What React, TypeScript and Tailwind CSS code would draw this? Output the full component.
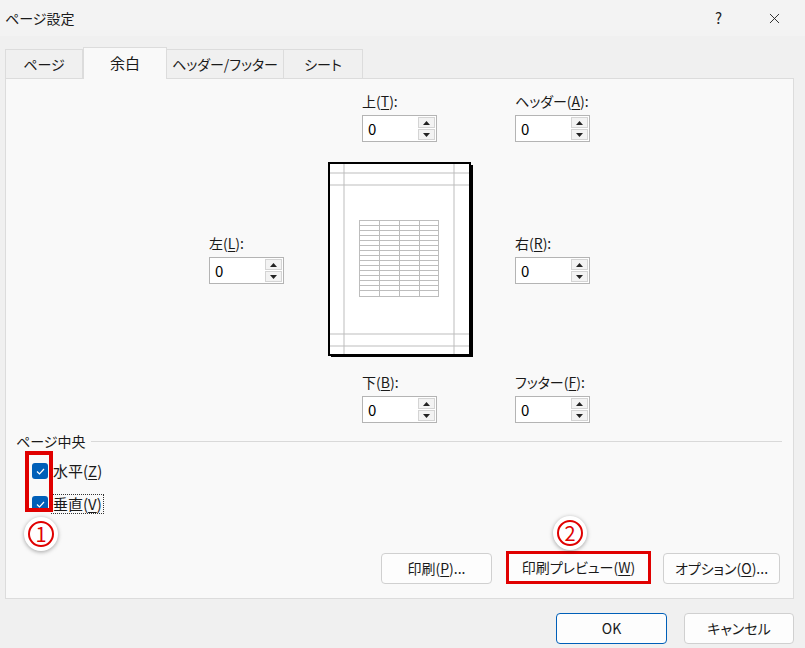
import { X } from "lucide-react"

const font = { fontFamily: '"Noto Sans CJK JP", "Noto Sans", sans-serif' }

function Spin({ label, mnemonic, suffix = "):" }: { label: string; mnemonic: string; suffix?: string }) {
    return (
        <div className="w-[75px]">
            <div className="h-[23px] text-[14px] leading-[18px] whitespace-nowrap text-[#1a1a1a]">
                {label}(<span className="underline underline-offset-2">{mnemonic}</span>{suffix}
            </div>
            <div className="flex h-[27px] w-[75px] border border-[#b4b4b4] bg-white">
                <div className="flex-1 pl-[5px] text-[15px] leading-[25px] text-black">0</div>
                <div className="flex flex-col gap-[1px] p-[1px] w-[19px]">
                    <div className="flex-1 flex items-center justify-center border border-[#d4d4d4] bg-[#f3f3f3]">
                        <svg width="7" height="4" viewBox="0 0 7 4"><path d="M0 4 L3.5 0 L7 4 Z" fill="#222" /></svg>
                    </div>
                    <div className="flex-1 flex items-center justify-center border border-[#d4d4d4] bg-[#f3f3f3]">
                        <svg width="7" height="4" viewBox="0 0 7 4"><path d="M0 0 L3.5 4 L7 0 Z" fill="#222" /></svg>
                    </div>
                </div>
            </div>
        </div>
    )
}

function PagePreview() {
    const rows = Array.from({ length: 16 }, (_, i) => 220 - 162 + i * 5)
    return (
        <svg width="146" height="196" viewBox="0 0 146 196">
            <rect x="3" y="3" width="142" height="192" fill="#000" />
            <rect x="1" y="1" width="141" height="192" fill="#fff" stroke="#000" strokeWidth="2" />
            {[16, 126].map((x) => (
                <line key={x} x1={x} y1="2" x2={x} y2="192" stroke="#bdbdbd" strokeWidth="1" />
            ))}
            {[11, 23, 172, 184].map((y) => (
                <line key={y} x1="2" y1={y} x2="141" y2={y} stroke="#bdbdbd" strokeWidth="1" />
            ))}
            <rect x="31.5" y="58.5" width="79" height="76" fill="none" stroke="#bdbdbd" />
            {rows.slice(1, 15).map((y) => (
                <line key={y} x1="31.5" y1={y + 0.5} x2="110.5" y2={y + 0.5} stroke="#bdbdbd" />
            ))}
            {[51.5, 71.5, 91.5].map((x) => (
                <line key={x} x1={x} y1="58.5" x2={x} y2="134.5" stroke="#bdbdbd" />
            ))}
        </svg>
    )
}

function Checkbox() {
    return (
        <div className="flex h-[16px] w-[16px] items-center justify-center rounded-[3px] bg-[#005fb8]">
            <svg width="9" height="7" viewBox="0 0 9 7"><path d="M1 3.5 L3.5 6 L8 1" stroke="#fff" strokeWidth="1.2" fill="none" /></svg>
        </div>
    )
}

function Badge({ n }: { n: string }) {
    return (
        <div className="flex h-[34px] w-[34px] items-center justify-center rounded-full bg-white shadow-[0_1px_4px_rgba(0,0,0,0.35)]">
            <div className="flex h-[26px] w-[26px] items-center justify-center rounded-full border-2 border-[#e00000] text-[20px] leading-none text-[#e00000]">
                {n}
            </div>
        </div>
    )
}

function Btn({ children, w, primary }: { children: React.ReactNode; w: string; primary?: boolean }) {
    return (
        <div className={`${w} flex h-[31px] items-center justify-center rounded-[4px] border bg-[#fdfdfd] text-[14px] text-[#1a1a1a] ${primary ? "border-[#005fb8]" : "border-[#d0d0d0]"}`}>
            {children}
        </div>
    )
}

export default function App() {
    return (
        <div className="relative flex h-[648px] w-[805px] flex-col overflow-hidden bg-[#f0f0f0] [font-feature-settings:'palt']" style={font}>
            {/* title bar */}
            <div className="flex h-[36px] items-center bg-[#f3f3f3] pl-[5px]">
                <span className="text-[14px] text-[#1a1a1a]">ページ設定</span>
                <span className="ml-auto mr-[44px] text-[15px] text-[#222]">?</span>
                <X size={17} strokeWidth={1.3} className="mr-[22px] text-[#222]" />
            </div>

            {/* tabs */}
            <div className="mt-[11px] flex h-[31px] items-end whitespace-nowrap px-[5px] text-[14px] text-[#1a1a1a]">
                <div className="flex h-[29px] w-[78px] items-center justify-center border border-b-0 border-[#dcdcdc] bg-[#f0f0f0]">ページ</div>
                <div className="z-10 -mb-px flex h-[32px] w-[84px] items-center justify-center border border-b-0 border-[#dcdcdc] bg-[#f9f9f9] text-[15px]">余白</div>
                <div className="flex h-[29px] w-[117px] items-center justify-center border border-b-0 border-l-0 border-[#dcdcdc] bg-[#f0f0f0]">ヘッダー/フッター</div>
                <div className="flex h-[29px] w-[79px] items-center justify-center border border-b-0 border-l-0 border-[#dcdcdc] bg-[#f0f0f0]">シート</div>
            </div>

            {/* panel */}
            <div className="mx-[5px] flex h-[521px] w-[789px] flex-col border border-[#dcdcdc] bg-[#f9f9f9]">
                <div className="mt-[13px] flex gap-[78px] pl-[356px]">
                    <Spin label="上" mnemonic="T" />
                    <Spin label="ヘッダー" mnemonic="A" />
                </div>

                <div className="mt-[20px] flex items-center pl-[203px]">
                    <div className="-mt-[2px]"><Spin label="左" mnemonic="L" /></div>
                    <div className="ml-[44px]"><PagePreview /></div>
                    <div className="ml-[41px] -mt-[2px]"><Spin label="右" mnemonic="R" /></div>
                </div>

                <div className="mt-[15px] flex gap-[78px] pl-[356px]">
                    <Spin label="下" mnemonic="B" />
                    <Spin label="フッター" mnemonic="F" />
                </div>

                {/* page center */}
                <div className="mt-[8px] flex items-center pl-[10px] pr-[11px]">
                    <span className="text-[14px] text-[#1a1a1a]">ページ中央</span>
                    <div className="ml-[6px] h-px flex-1 bg-[#d9d9d9]" />
                </div>
                <div className="relative ml-[26px] mt-[10px] flex flex-col gap-[14px]">
                    <div className="flex items-center gap-[5px]">
                        <Checkbox />
                        <span className="text-[15px] leading-[18px] text-[#1a1a1a]">水平(<span className="underline underline-offset-2">Z</span>)</span>
                    </div>
                    <div className="flex items-center gap-[5px]">
                        <Checkbox />
                        <span className="-ml-[2px] border border-dotted border-[#333] px-[1px] text-[15px] leading-[18px] text-[#1a1a1a]">垂直(<span className="underline underline-offset-2">V</span>)</span>
                    </div>
                    <div className="absolute -left-[7px] -top-[11px] h-[61px] w-[28px] border-[4px] border-[#e00000]" />
                </div>
                <div className="ml-[18px] mt-[3px]"><Badge n="1" /></div>

                <div className="mt-auto mb-[18px] flex items-end justify-end gap-[12px] pr-[13px]">
                    <Btn w="w-[111px]">印刷(<span className="underline underline-offset-2">P</span>)...</Btn>
                    <div className="relative ml-[2px] border-[3px] border-[#e00000] p-0">
                        <div className="flex h-[27px] w-[139px] items-center justify-center bg-[#fdfdfd] text-[14px] text-[#1a1a1a]">
                            印刷プレビュー(<span className="underline underline-offset-2">W</span>)
                        </div>
                        <div className="absolute left-[44px] -top-[38px]"><Badge n="2" /></div>
                    </div>
                    <Btn w="w-[117px]">オプション(<span className="underline underline-offset-2">O</span>)...</Btn>
                </div>
            </div>

            {/* bottom */}
            <div className="mt-[14px] flex justify-end gap-[17px] pr-[11px]">
                <Btn w="w-[111px]" primary>OK</Btn>
                <Btn w="w-[110px]">キャンセル</Btn>
            </div>
        </div>
    )
}
